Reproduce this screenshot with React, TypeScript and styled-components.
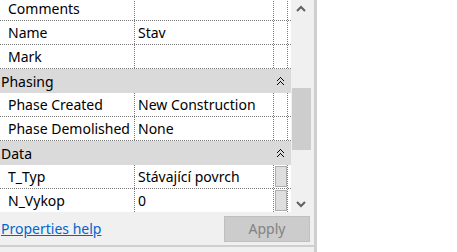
import styled, { createGlobalStyle } from "styled-components";

const GlobalStyle = createGlobalStyle`
  html, body {
    margin: 0;
    padding: 0;
    background: #fff;
  }
  body {
    font-family: "Noto Sans", "Open Sans", sans-serif;
    font-size: 14px;
    color: #000;
  }
`;

type Row =
  | { kind: "group"; title: string }
  | { kind: "prop"; label: string; value: string; button?: boolean };

const rows: Row[] = [
  { kind: "prop", label: "Comments", value: "" },
  { kind: "prop", label: "Name", value: "Stav" },
  { kind: "prop", label: "Mark", value: "" },
  { kind: "group", title: "Phasing" },
  { kind: "prop", label: "Phase Created", value: "New Construction" },
  { kind: "prop", label: "Phase Demolished", value: "None" },
  { kind: "group", title: "Data" },
  { kind: "prop", label: "T_Typ", value: "Stávající povrch", button: true },
  { kind: "prop", label: "N_Vykop", value: "0", button: true },
];

const CollapseIcon = () => (
  <svg width="7" height="9" viewBox="0 0 7 9" shapeRendering="crispEdges">
    <path d="M3 0h1v1h1v1h1v1h1v1H6V3H5V2H4V1H3v1H2v1H1v1H0V3h1V2h1V1h1z" fill="#000" />
    <path d="M3 4h1v1h1v1h1v1h1v1H6V7H5V6H4V5H3v1H2v1H1v1H0V7h1V6h1V5h1z" fill="#000" />
  </svg>
);

const Chevron = ({ down }: { down?: boolean }) => (
  <svg
    width="10"
    height="7"
    viewBox="0 0 10 7"
    style={down ? { transform: "rotate(180deg)" } : undefined}
  >
    <polyline
      points="1,6 5,2 9,6"
      fill="none"
      stroke="#606060"
      strokeWidth="2"
    />
  </svg>
);

export default function App() {
  return (
    <Page>
      <GlobalStyle />
      <Panel>
        <GridArea>
          <Table>
            {rows.map((r, i) =>
              r.kind === "group" ? (
                <GroupRow key={i}>
                  <GroupTitle>{r.title}</GroupTitle>
                  <CollapseIcon />
                </GroupRow>
              ) : (
                <PropRow key={i}>
                  <LabelCell>{r.label}</LabelCell>
                  <ValueCell>{r.value}</ValueCell>
                  <ExtraCell>{r.button && <EditButton />}</ExtraCell>
                </PropRow>
              )
            )}
          </Table>
          <Scrollbar>
            <ArrowBox>
              <Chevron />
            </ArrowBox>
            <Track>
              <Thumb />
            </Track>
            <ArrowBox>
              <Chevron down />
            </ArrowBox>
          </Scrollbar>
        </GridArea>
        <Footer>
          <HelpLink href="#">Properties help</HelpLink>
          <ApplyButton disabled>Apply</ApplyButton>
        </Footer>
        <BottomEdge />
      </Panel>
    </Page>
  );
}

const Page = styled.div`
  width: 457px;
  height: 252px;
  overflow: hidden;
  background: #fff;
  display: flex;
`;

const Panel = styled.div`
  width: 314px;
  border-right: 3px solid #cfcfcf;
  background: #f0f0f0;
  display: flex;
  flex-direction: column;
`;

const GridArea = styled.div`
  height: 212px;
  display: flex;
  overflow: hidden;
`;

const Table = styled.div`
  width: 291px;
  margin-top: -3px;
  background: #fff;
  display: flex;
  flex-direction: column;
  flex-shrink: 0;
`;

const PropRow = styled.div`
  display: flex;
  height: 24px;
  flex-shrink: 0;
  border-bottom: 1px dotted #7a7a7a;
  box-sizing: border-box;
`;

const Cell = styled.div`
  display: flex;
  align-items: center;
  border-right: 1px dotted #7a7a7a;
  white-space: nowrap;
  overflow: hidden;
`;

const LabelCell = styled(Cell)`
  width: 135px;
  padding-left: 8px;
  box-sizing: border-box;
`;

const ValueCell = styled(Cell)`
  width: 139px;
  padding-left: 3px;
  box-sizing: border-box;
`;

const ExtraCell = styled(Cell)`
  width: 14px;
  padding: 1px 0 1px 1px;
  box-sizing: border-box;
  align-items: stretch;
`;

const EditButton = styled.div`
  flex: 1;
  background: #dedede;
  border: 1px solid #adadad;
`;

const GroupRow = styled.div`
  display: flex;
  align-items: center;
  justify-content: space-between;
  height: 24px;
  flex-shrink: 0;
  background: #dadada;
  padding: 0 7px 0 1px;
  box-sizing: border-box;
`;

const GroupTitle = styled.span``;

const Scrollbar = styled.div`
  width: 22px;
  margin-left: 1px;
  display: flex;
  flex-direction: column;
`;

const ArrowBox = styled.div`
  height: 16px;
  display: flex;
  align-items: center;
  justify-content: center;
  padding-right: 4px;
`;

const Track = styled.div`
  flex: 1;
  display: flex;
  flex-direction: column;
  padding: 72px 3px 0 0;
`;

const Thumb = styled.div`
  height: 62px;
  background: #cdcdcd;
`;

const Footer = styled.div`
  height: 33px;
  display: flex;
  align-items: center;
  justify-content: space-between;
  padding: 0 4px 0 1px;
`;

const HelpLink = styled.a`
  color: #0066cc;
  text-decoration: underline;
`;

const ApplyButton = styled.button`
  width: 86px;
  height: 26px;
  background: #cccccc;
  border: 1px solid #bfbfbf;
  color: #838383;
  font-family: inherit;
  font-size: 14px;
  padding: 0;
`;

const BottomEdge = styled.div`
  height: 2px;
  background: #cfcfcf;
`;
